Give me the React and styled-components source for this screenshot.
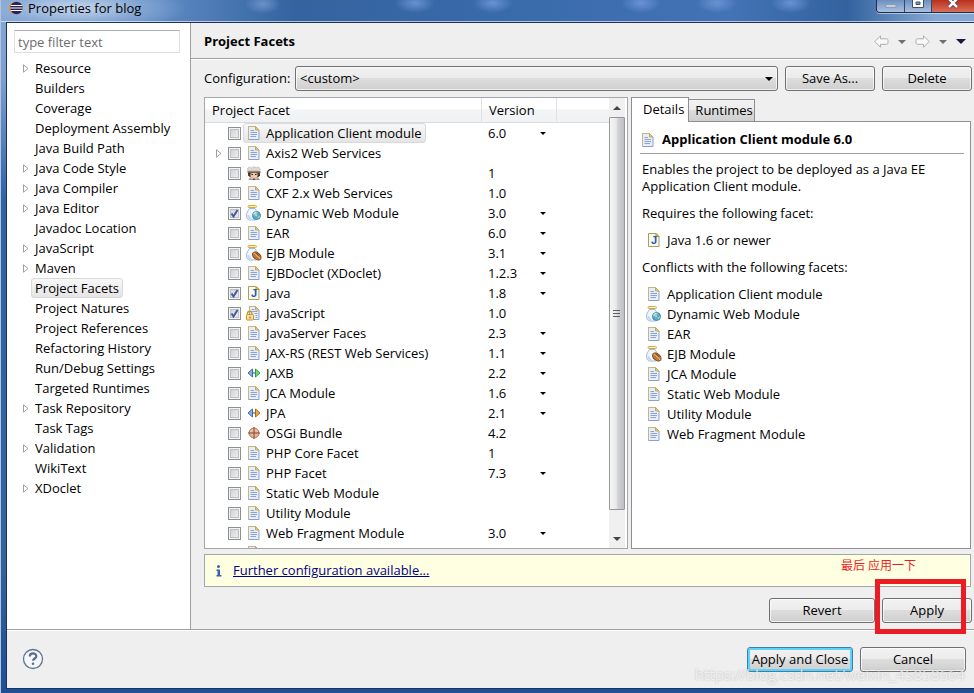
'use strict';

import React from 'react';
import styled, { createGlobalStyle, css } from 'styled-components';

const GlobalStyle = createGlobalStyle`
  * {
    box-sizing: border-box;
  }

  body {
    margin: 0;
    font-family: 'Open Sans', 'Noto Sans CJK SC', sans-serif;
    font-size: 13px;
    line-height: 17px;
    color: #000;
  }

  button, input, select {
    font: inherit;
    color: inherit;
    margin: 0;
  }

  svg {
    display: block;
    flex: none;
  }
`;

/* ---------- window frame ---------- */

const Window = styled.div`
  position: relative;
  display: flex;
  flex-direction: column;
  min-height: 100vh;
  padding: 0 0 4px 6px;
  overflow: hidden;
  background:
    linear-gradient(90deg, #b4c4da 0, #b4c4da 1px, transparent 1px),
    linear-gradient(180deg, #86a8d6 0, #7c9fd0 80px, #2f62a8 200px, #33629f 560px, #1f4f94 100%);
`;

const TitleBar = styled.header`
  display: flex;
  justify-content: space-between;
  align-items: flex-start;
  height: 22px;
  margin-left: -5px;
  padding-left: 8px;
  background:
    radial-gradient(ellipse 110px 24px at 76px 8px, rgba(214, 226, 243, 0.85) 0, rgba(160, 188, 224, 0.5) 60%, transparent 100%),
    radial-gradient(ellipse 18px 10px at 262px 4px, rgba(120, 155, 210, 0.8), transparent),
    radial-gradient(ellipse 20px 10px at 414px 3px, rgba(110, 150, 215, 0.9), transparent),
    radial-gradient(ellipse 20px 10px at 492px 3px, rgba(110, 150, 215, 0.9), transparent),
    radial-gradient(ellipse 20px 10px at 640px 3px, rgba(110, 150, 215, 0.9), transparent),
    radial-gradient(ellipse 20px 10px at 716px 3px, rgba(110, 150, 215, 0.9), transparent),
    radial-gradient(ellipse 20px 10px at 790px 3px, rgba(110, 150, 215, 0.9), transparent),
    linear-gradient(90deg, #7ea2d2 0, #5f8bc4 16%, #34639f 30%, #3a6bab 55%, #4473b5 75%, #33629f 87%, #86a8d4 96%);
  box-shadow: inset 0 -1px 0 rgba(255, 255, 255, 0.6);
`;

const Title = styled.h1`
  display: flex;
  align-items: center;
  gap: 5px;
  height: 16px;
  margin: 0;
  font-size: 13px;
  font-weight: normal;
`;

const Caption = styled.div`
  display: flex;
  height: 13px;
  border: 1px solid #1d2e4a;
  border-top: 0;
  border-right: 0;
  border-radius: 0 0 0 4px;
  box-shadow: 0 1px 0 rgba(255, 255, 255, 0.5);
  overflow: hidden;
`;

const CaptionButton = styled.button`
  display: flex;
  justify-content: center;
  width: ${props => (props.$close ? '43px' : '27px')};
  padding: 0;
  border: 0;
  border-left: 1px solid #33486b;
  background: ${props => (props.$close
    ? 'linear-gradient(180deg, #b92f1c, #d8705a)'
    : 'linear-gradient(180deg, #6c8fbf, #a9c0e0)')};

  &:first-child {
    border-left: 0;
  }
`;

const Client = styled.div`
  flex: 1;
  display: flex;
  flex-direction: column;
  border: 1px solid #1b3358;
  border-right: 0;
  background: #efefef;
`;

const Body = styled.div`
  flex: 1;
  display: flex;
  border-bottom: 1px solid #a0a0a0;
`;

/* ---------- left side ---------- */

const Sidebar = styled.nav`
  flex: none;
  width: 184px;
  padding: 7px 10px 0 7px;
  border-right: 1px solid #a0a0a0;
  background: #fff;
`;

const Filter = styled.input`
  display: block;
  width: 100%;
  height: 23px;
  padding: 0 3px;
  border: 1px solid #dbdfe6;
  border-top-color: #abadb3;
  background: #fff;

  &::placeholder {
    color: #6d6d6d;
    opacity: 1;
  }
`;

const Tree = styled.ul`
  margin: 5px 0 0;
  padding: 0 0 0 7px;
  list-style: none;
`;

const TreeItem = styled.li`
  display: flex;
  align-items: center;
  height: 20px;
`;

const Expander = styled.span`
  flex: none;
  display: flex;
  justify-content: center;
  width: 10px;
`;

const selection = css`
  border-color: #d9d9d9;
  background: linear-gradient(180deg, #f8f8f8, #e5e5e5);
`;

const TreeLabel = styled.button`
  height: 20px;
  padding: 0 3px;
  border: 1px solid transparent;
  border-radius: 3px;
  background: none;
  line-height: 17px;
  ${props => props.$selected && selection}
`;

/* ---------- right side ---------- */

const Page = styled.main`
  flex: 1;
  min-width: 0;
  display: flex;
  flex-direction: column;
`;

const PageHeader = styled.div`
  display: flex;
  align-items: center;
  justify-content: space-between;
  height: 36px;
  padding: 2px 8px 0 13px;
  border-bottom: 1px solid #a0a0a0;
  box-shadow: 0 1px 0 #fff;
`;

const PageTitle = styled.h2`
  margin: 0;
  font-size: 13px;
  font-weight: bold;
`;

const NavTools = styled.div`
  display: flex;
  align-items: center;
  gap: 9px;
`;

const ToolButton = styled.button`
  display: flex;
  padding: 0;
  border: 0;
  background: none;
`;

const Content = styled.div`
  flex: 1;
  display: flex;
  flex-direction: column;
  padding: 7px 2px 6px 13px;
`;

const ConfigRow = styled.div`
  display: flex;
  align-items: center;
  gap: 7px;
`;

const ConfigLabel = styled.label`
  flex: none;
  width: 84px;
`;

const raised = css`
  border: 1px solid #707070;
  border-radius: 3px;
  background: linear-gradient(180deg, #f2f2f2 0, #ebebeb 50%, #dddddd 50%, #cfcfcf 100%);
  box-shadow: inset 0 0 0 1px rgba(255, 255, 255, 0.7);
`;

const Button = styled.button`
  flex: none;
  width: ${props => (props.$wide ? '106px' : '90px')};
  height: 25px;
  padding: 0;
  white-space: nowrap;
  ${raised}
  ${props => props.$primary && css`
    border-color: #3c7fb1;
    box-shadow: inset 0 0 0 2px #5fd3f5;
  `}
`;

const SelectBox = styled.span`
  flex: 1;
  display: grid;
  align-items: center;
  height: 25px;
  ${raised}

  > * {
    grid-area: 1 / 1;
  }

  > svg {
    justify-self: end;
    margin-right: 4px;
    pointer-events: none;
  }
`;

const PlainSelect = styled.select`
  width: 100%;
  padding: 0 4px;
  border: 0;
  background: none;
  appearance: none;
`;

const Panels = styled.div`
  display: flex;
  gap: 3px;
  margin: 6px 1px 0 0;
`;

const FacetPanel = styled.section`
  flex: 424 1 424px;
  display: flex;
  min-width: 0;
  height: 452px;
  padding-right: 2px;
  border: 1px solid #a3a6ac;
  background: #fff;
`;

const TableClip = styled.div`
  flex: 1;
  min-width: 0;
  overflow: hidden;
`;

const Table = styled.table`
  width: 100%;
  table-layout: fixed;
  border-collapse: separate;
  border-spacing: 0;
`;

const Column = styled.th`
  width: ${props => props.$width};
  height: 25px;
  padding: 0 7px;
  border-right: 1px solid #e0e2e5;
  border-bottom: 1px solid #d9dbdf;
  background: linear-gradient(180deg, #fff 0, #fff 45%, #f3f4f6 50%, #f1f2f4 100%);
  font-weight: normal;
  text-align: left;

  &:last-child {
    border-right: 0;
  }
`;

const Cell = styled.td`
  height: 20px;
  padding: 0;
`;

const FacetRow = styled.div`
  display: flex;
  align-items: center;
  height: 20px;
  padding-left: ${props => (props.$bare ? '41px' : '9px')};
`;

const CheckBox = styled.span`
  display: grid;
  flex: none;
  margin: 1px 2px 0 4px;

  > * {
    grid-area: 1 / 1;
  }

  > svg {
    pointer-events: none;
  }
`;

const CheckInput = styled.input`
  width: 13px;
  height: 13px;
  appearance: none;
  border: 1px solid #8e8f8f;
  background: linear-gradient(135deg, #c9cdd2, #f4f4f4);
  box-shadow: inset 0 0 0 1px #f4f4f4, inset 0 0 0 2px #bdc1c6;
`;

const FacetLabel = styled.label`
  display: flex;
  align-items: center;
  gap: 4px;
  height: 20px;
  padding: 0 3px 0 2px;
  border: 1px solid transparent;
  border-radius: 3px;
  white-space: nowrap;
  ${props => props.$selected && selection}
`;

const Version = styled.span`
  display: grid;
  align-items: center;
  width: 64px;
  padding-left: 6px;

  > * {
    grid-area: 1 / 1;
  }

  > svg {
    justify-self: end;
    pointer-events: none;
  }
`;

const VersionSelect = styled(PlainSelect)`
  padding: 0;
`;

const ScrollBar = styled.div`
  flex: none;
  display: flex;
  flex-direction: column;
  width: 16px;
  background: #f0f0f0;
`;

const ScrollArrow = styled.button`
  display: flex;
  justify-content: center;
  align-items: center;
  height: 19px;
  padding: 0;
  border: 0;
  background: none;
`;

const ScrollThumb = styled.div`
  display: flex;
  justify-content: center;
  align-items: center;
  height: 393px;
  margin-bottom: auto;
  border: 1px solid #979797;
  border-radius: 1px;
  background: linear-gradient(90deg, #f5f5f5 0, #e9e9eb 45%, #d2d3d6 55%, #bfc0c4 100%);
`;

const DetailsPanel = styled.section`
  flex: 340 1 340px;
  display: flex;
  flex-direction: column;
  min-width: 0;
`;

const Tabs = styled.div`
  display: flex;
  align-items: flex-end;
  height: 24px;
`;

const Tab = styled.button`
  position: relative;
  height: ${props => (props.$active ? '25px' : '22px')};
  margin-bottom: ${props => (props.$active ? '-1px' : '0')};
  padding: ${props => (props.$active ? '0 4px 2px 11px' : '0 1px 0 6px')};
  border: 1px solid #8c8e94;
  border-left-width: ${props => (props.$active ? '1px' : '0')};
  border-bottom: 0;
  background: ${props => (props.$active
    ? '#fff'
    : 'linear-gradient(180deg, #f2f2f2 0, #ebebeb 50%, #dddddd 50%, #cfcfcf 100%)')};
`;

const TabBody = styled.div`
  flex: 1;
  padding: 8px 6px 0 8px;
  border: 1px solid #8c8e94;
  background: #fff;
`;

const DetailsTitle = styled.h3`
  display: flex;
  align-items: center;
  gap: 6px;
  height: 24px;
  margin: 0;
  padding-bottom: 4px;
  border-bottom: 1px solid #a0a0a0;
  font-size: 13px;
`;

const Paragraph = styled.p`
  max-width: 300px;
  margin: 7px 0 8px 2px;

  & + & {
    margin-top: 10px;
  }
`;

const FacetList = styled.ul`
  margin: 0 0 9px;
  padding: 0 0 0 6px;
  list-style: none;
`;

const FacetListItem = styled.li`
  display: flex;
  align-items: center;
  gap: 5px;
  height: 20px;
`;

const InfoBar = styled.div`
  position: relative;
  display: flex;
  align-items: center;
  gap: 8px;
  height: 33px;
  margin: 5px 1px 0 0;
  padding-left: 8px;
  border: 1px solid #a3a6ac;
  background: #ffffe1;
`;

const InfoLink = styled.a`
  color: #00008b;
  text-decoration: underline;
`;

const Note = styled.span`
  position: absolute;
  top: 2px;
  right: 54px;
  color: #ed1c24;
  font-size: 12px;
`;

const PageButtons = styled.div`
  display: flex;
  justify-content: flex-end;
  gap: 7px;
  margin-top: 11px;
`;

const Marked = styled.span`
  position: relative;
  display: flex;

  &::after {
    content: '';
    position: absolute;
    inset: -19px 6px -11px -7px;
    border: 5px solid #ed1c24;
    pointer-events: none;
  }
`;

const Footer = styled.footer`
  display: flex;
  align-items: center;
  justify-content: space-between;
  height: 58px;
  padding: 0 8px 0 15px;
  box-shadow: inset 0 1px 0 #fff;
`;

const FooterButtons = styled.div`
  display: flex;
  gap: 7px;
`;

const Watermark = styled.span`
  position: absolute;
  right: 9px;
  bottom: 9px;
  color: rgba(255, 255, 255, 0.7);
  font-size: 15px;
  line-height: 20px;
  text-shadow: 0 0 2px rgba(120, 120, 120, 0.5);
  pointer-events: none;
`;

/* ---------- icons ---------- */

const Svg = ({ size = 16, children }) => (
  <svg width={size} height={size} viewBox={`0 0 ${size} ${size}`} aria-hidden="true">
    {children}
  </svg>
);

const DocIcon = () => (
  <Svg>
    <path d="M2.500 1.500h7l3.500 3.500v9.500H2.500z" fill="#e6eefa" stroke="#8d9fca" />
    <path d="M2.500 14V1.500h7" fill="none" stroke="#c8b67c" />
    <path d="M9.500 1.500v3.500h3.500z" fill="#e8c877" stroke="#c6a85a" />
    <path d="M4.500 5.500h3.500M4.500 7.500h6.500M4.500 9.500h6.500M4.500 11.500h5.500" stroke="#8ba3d6" />
  </Svg>
);

const JavaIcon = () => (
  <Svg>
    <path d="M2.500 1.500h7.500l3 3v10H2.500z" fill="#f3f8fd" stroke="#b99a45" />
    <path d="M10 1.500v3h3z" fill="#edcb72" stroke="#b98f35" />
    <text x="5" y="12" fontSize="11" fontWeight="bold" fontFamily="Liberation Sans, sans-serif" fill="#1f5f96">J</text>
  </Svg>
);

const LockedDocIcon = () => (
  <Svg>
    <path d="M3.500 1.500h6l3.500 3.500v9.500H3.500z" fill="#e6eefa" stroke="#8d9fca" />
    <path d="M3.500 8V1.500h6" fill="none" stroke="#c8b67c" />
    <path d="M9.500 1.500v3.500h3.500z" fill="#e8c877" stroke="#c6a85a" />
    <path d="M5.500 4.500h3M5.500 6.500h6M8.500 8.500h3M9.500 10.500h2M9.500 12.500h2" stroke="#8ba3d6" />
    <path d="M1.500 10V8.500a2.200 2.200 0 0 1 4.500 0V10" fill="none" stroke="#c4952a" strokeWidth="1.300" />
    <rect x=".500" y="9.500" width="7" height="5.500" rx="1" fill="#f8e09a" stroke="#c4952a" />
    <path d="M4 11.500v2" stroke="#80601a" />
  </Svg>
);

const Jar = () => (
  <g>
    <path d="M3.500 3.500C2 6 .500 7.500.500 10.500c0 3 1.500 4.500 3.500 4.500h5c2 0 3.200-1.800 3.200-4.500 0-3-1.800-4.500-3.200-7z" fill="#f0f6fc" stroke="#9dbbdf" />
    <path d="M2.300 10c0 2.500 1 3.700 3 3.700" fill="none" stroke="#c3dbf1" strokeWidth="2" />
    <rect x="2" y=".500" width="8.500" height="2" rx="1" fill="#fdf0c4" stroke="#d9a938" />
  </g>
);

const WebJarIcon = () => (
  <Svg>
    <Jar />
    <circle cx="10.500" cy="10.500" r="4" fill="#5aa6df" stroke="#4084bd" />
    <path d="M8 8c1.500-1.500 3-1.500 4-.500L10.500 9l1 1.500-1.500 1L8 10zM11.500 12l2-1.500.500 1-1.500 2z" fill="#a9dd8d" />
    <path d="M7.500 9.500c.500-1.500 1.500-2 2.500-2.200" fill="none" stroke="#e4f4fc" />
  </Svg>
);

const BeanJarIcon = () => (
  <Svg>
    <Jar />
    <ellipse cx="10.800" cy="11" rx="4.800" ry="3.200" transform="rotate(40 10.800 11)" fill="#bd7a3c" stroke="#804717" />
    <path d="M7.500 8c2.500 0 2 2.500 3.500 3s2 1 3 3" fill="none" stroke="#f0c48c" />
    <path d="M9.500 7.800c2 .700 1.500 2 3.700 3" fill="none" stroke="#804717" />
  </Svg>
);

const ComposerIcon = () => (
  <Svg>
    <path d="M2 6c-2-3 2-5 3.500-3 1-1.500 3.500-1.500 4.500 0 2-2 5.500 0 3.500 3z" fill="#dedbd6" stroke="#b9b5af" strokeWidth=".700" />
    <path d="M2 6.500h12v4l-2 2H4.500L2 10.500z" fill="#4a362c" />
    <path d="M4.500 8.500c2-1 5-1 7 0v3c-1 2.500-6 2.500-7 0z" fill="#efc7a4" />
    <path d="M5.500 9.500h1.500M9 9.500h1.500" stroke="#2c1d17" />
    <path d="M3.500 13c2 1 7 1 9 0l1.500 2H2.500z" fill="#9b9590" />
    <path d="M6.500 13.500h3l-1.500 2z" fill="#4b4542" />
    <path d="M1 7h14" stroke="#8a837c" />
  </Svg>
);

const ArrowsIcon = ({ fill, stroke }) => (
  <Svg>
    <path d="M6.500 4v8L2 8z" fill="#86b3e6" stroke="#3e6ca6" />
    <path d="M9.500 4v8L14 8z" fill={fill} stroke={stroke} />
    <path d="M6.500 8h3" stroke="#33527c" />
  </Svg>
);

const OsgiIcon = () => (
  <Svg>
    <circle cx="8" cy="8" r="5" fill="#dfb59d" stroke="#b3785b" />
    <path d="M8 2v12M2 8h12" stroke="#8b4a2f" />
    <path d="M5 6.500c.300-.800.700-1.200 1.500-1.500M9.500 5c.800.300 1.200.700 1.500 1.500" fill="none" stroke="#f6e3d8" />
  </Svg>
);

const EclipseIcon = () => (
  <Svg size={14}>
    <circle cx="6" cy="7" r="6" fill="#f7941e" />
    <circle cx="7.500" cy="7" r="6.200" fill="#2c2255" />
    <path d="M1.800 4.500h11.400M1.300 7h12.400M1.800 9.500h11.400" stroke="#fff" strokeWidth="1.200" />
  </Svg>
);

const Caret = ({ width = 8, color = '#000' }) => (
  <svg width={width} height={width / 2} viewBox="0 0 8 4" aria-hidden="true">
    <path d="M0 0h8L4 4z" fill={color} />
  </svg>
);

const Triangle = () => (
  <svg width="6" height="9" viewBox="0 0 6 9" aria-hidden="true">
    <path d="M.500.800v7.400l4.500-3.700z" fill="#fff" stroke="#a0a0a0" />
  </svg>
);

const CheckMark = () => (
  <svg width="13" height="13" viewBox="0 0 13 13" aria-hidden="true">
    <path d="M3.500 6.500l2 3L9.500 3" fill="none" stroke="#3f5c9c" strokeWidth="2" />
  </svg>
);

const HistoryArrow = ({ forward }) => (
  <svg width="15" height="13" viewBox="0 0 15 13" aria-hidden="true">
    <path
      d="M.800 6.500L6.500.800v3h6q1.500 0 1.500 1.500v2.500q0 1.500-1.500 1.500h-6v3z"
      transform={forward ? 'translate(15 0) scale(-1 1)' : undefined}
      fill="#f8f8f8"
      stroke="#b0b0b0"
    />
  </svg>
);

const InfoIcon = () => (
  <svg width="12" height="16" viewBox="0 0 12 16" aria-hidden="true">
    <circle cx="5.500" cy="3.500" r="1.500" fill="#3b62ad" />
    <path d="M3.500 6.500H7V12h1.500v1.500h-5V12h1V8h-1z" fill="#3b62ad" />
  </svg>
);

const HelpIcon = () => (
  <Svg size={22}>
    <circle cx="11" cy="11" r="9.500" fill="#f6f7f9" stroke="#5f7394" strokeWidth="1.300" />
    <path d="M7.800 8.500c0-4 6.500-4 6.500-.300 0 2.300-3.200 2.300-3.200 4.600" fill="none" stroke="#5a6d8f" strokeWidth="2.200" />
    <circle cx="11" cy="15.800" r="1.300" fill="#5a6d8f" />
  </Svg>
);

const icons = {
  doc: <DocIcon />,
  java: <JavaIcon />,
  locked: <LockedDocIcon />,
  web: <WebJarIcon />,
  ejb: <BeanJarIcon />,
  composer: <ComposerIcon />,
  jaxb: <ArrowsIcon fill="#72dc72" stroke="#30a040" />,
  jpa: <ArrowsIcon fill="#f0a83c" stroke="#b06d14" />,
  osgi: <OsgiIcon />
};

/* ---------- data ---------- */

const tree = [
  { name: 'Resource', children: true },
  { name: 'Builders' },
  { name: 'Coverage' },
  { name: 'Deployment Assembly' },
  { name: 'Java Build Path' },
  { name: 'Java Code Style', children: true },
  { name: 'Java Compiler', children: true },
  { name: 'Java Editor', children: true },
  { name: 'Javadoc Location' },
  { name: 'JavaScript', children: true },
  { name: 'Maven', children: true },
  { name: 'Project Facets' },
  { name: 'Project Natures' },
  { name: 'Project References' },
  { name: 'Refactoring History' },
  { name: 'Run/Debug Settings' },
  { name: 'Targeted Runtimes' },
  { name: 'Task Repository', children: true },
  { name: 'Task Tags' },
  { name: 'Validation', children: true },
  { name: 'WikiText' },
  { name: 'XDoclet', children: true }
];

const facets = [
  { name: 'Application Client module', icon: 'doc', version: '6.0', choice: true },
  { name: 'Axis2 Web Services', icon: 'doc', children: true },
  { name: 'Composer', icon: 'composer', version: '1' },
  { name: 'CXF 2.x Web Services', icon: 'doc', version: '1.0' },
  { name: 'Dynamic Web Module', icon: 'web', version: '3.0', choice: true, checked: true },
  { name: 'EAR', icon: 'doc', version: '6.0', choice: true },
  { name: 'EJB Module', icon: 'ejb', version: '3.1', choice: true },
  { name: 'EJBDoclet (XDoclet)', icon: 'doc', version: '1.2.3', choice: true },
  { name: 'Java', icon: 'java', version: '1.8', choice: true, checked: true },
  { name: 'JavaScript', icon: 'locked', version: '1.0', checked: true },
  { name: 'JavaServer Faces', icon: 'doc', version: '2.3', choice: true },
  { name: 'JAX-RS (REST Web Services)', icon: 'doc', version: '1.1', choice: true },
  { name: 'JAXB', icon: 'jaxb', version: '2.2', choice: true },
  { name: 'JCA Module', icon: 'doc', version: '1.6', choice: true },
  { name: 'JPA', icon: 'jpa', version: '2.1', choice: true },
  { name: 'OSGi Bundle', icon: 'osgi', version: '4.2' },
  { name: 'PHP Core Facet', icon: 'doc', version: '1' },
  { name: 'PHP Facet', icon: 'doc', version: '7.3', choice: true },
  { name: 'Static Web Module', icon: 'doc' },
  { name: 'Utility Module', icon: 'doc' },
  { name: 'Web Fragment Module', icon: 'doc', version: '3.0', choice: true }
];

const conflicts = [
  { name: 'Application Client module', icon: 'doc' },
  { name: 'Dynamic Web Module', icon: 'web' },
  { name: 'EAR', icon: 'doc' },
  { name: 'EJB Module', icon: 'ejb' },
  { name: 'JCA Module', icon: 'doc' },
  { name: 'Static Web Module', icon: 'doc' },
  { name: 'Utility Module', icon: 'doc' },
  { name: 'Web Fragment Module', icon: 'doc' }
];

/* ---------- parts ---------- */

const Facet = ({ facet, selected, onToggle }) => {
  const id = 'facet-' + facet.name.replace(/\W+/g, '-').toLowerCase();

  return (
    <tr>
      <Cell>
        <FacetRow>
          <Expander>{facet.children && <Triangle />}</Expander>
          <CheckBox>
            <CheckInput type="checkbox" id={id} checked={facet.checked} onChange={onToggle} />
            {facet.checked && <CheckMark />}
          </CheckBox>
          <FacetLabel htmlFor={id} $selected={selected}>
            {icons[facet.icon]}
            {facet.name}
          </FacetLabel>
        </FacetRow>
      </Cell>
      <Cell>
        <Version>
          {facet.choice ? (
            <>
              <VersionSelect aria-label={facet.name + ' version'}>
                <option>{facet.version}</option>
              </VersionSelect>
              <Caret width={6} />
            </>
          ) : facet.version}
        </Version>
      </Cell>
      <Cell />
    </tr>
  );
};

const FacetItems = ({ items }) => (
  <FacetList>
    {items.map(item => (
      <FacetListItem key={item.name}>
        {icons[item.icon]}
        {item.name}
      </FacetListItem>
    ))}
  </FacetList>
);

class App extends React.Component {
  state = {
    page: 'Project Facets',
    checked: facets.filter(f => f.checked).map(f => f.name)
  };

  toggle(name) {
    const { checked } = this.state;
    this.setState({
      checked: checked.includes(name)
        ? checked.filter(n => n !== name)
        : checked.concat(name)
    });
  }

  render() {
    const { page, checked } = this.state;

    return (
      <Window>
        <GlobalStyle />
        <TitleBar>
          <Title><EclipseIcon />Properties for blog</Title>
          <Caption>
            <CaptionButton aria-label="Minimize">
              <svg width="12" height="12" viewBox="0 0 12 12"><path d="M1 4.500h10v3H1z" fill="#c4d0e2" stroke="#8c9bb5" /></svg>
            </CaptionButton>
            <CaptionButton aria-label="Maximize">
              <svg width="12" height="12" viewBox="0 0 12 12"><path d="M.500-2h11v9.500H.500z" fill="#fff" stroke="#43506a" /><path d="M4 2h4v2.500H4z" fill="#7f9bc4" stroke="#43506a" /></svg>
            </CaptionButton>
            <CaptionButton $close aria-label="Close">
              <svg width="12" height="12" viewBox="0 0 12 12"><path d="M2-1l8 8M10-1L2 7" stroke="#57334a" strokeWidth="4" /><path d="M2-1l8 8M10-1L2 7" stroke="#fff" strokeWidth="2.500" /></svg>
            </CaptionButton>
          </Caption>
        </TitleBar>

        <Client>
          <Body>
            <Sidebar>
              <Filter placeholder="type filter text" aria-label="type filter text" />
              <Tree>
                {tree.map(item => (
                  <TreeItem key={item.name}>
                    <Expander>{item.children && <Triangle />}</Expander>
                    <TreeLabel
                      $selected={item.name === page}
                      onClick={() => this.setState({ page: item.name })}
                    >
                      {item.name}
                    </TreeLabel>
                  </TreeItem>
                ))}
              </Tree>
            </Sidebar>

            <Page>
              <PageHeader>
                <PageTitle>Project Facets</PageTitle>
                <NavTools>
                  <ToolButton aria-label="Back"><HistoryArrow /></ToolButton>
                  <ToolButton aria-label="Back history"><Caret color="#6e6e76" /></ToolButton>
                  <ToolButton aria-label="Forward"><HistoryArrow forward /></ToolButton>
                  <ToolButton aria-label="Forward history"><Caret color="#6e6e76" /></ToolButton>
                  <ToolButton aria-label="Menu"><Caret width={10} color="#24143c" /></ToolButton>
                </NavTools>
              </PageHeader>

              <Content>
                <ConfigRow>
                  <ConfigLabel htmlFor="configuration">Configuration:</ConfigLabel>
                  <SelectBox>
                    <PlainSelect id="configuration">
                      <option>&lt;custom&gt;</option>
                    </PlainSelect>
                    <Caret />
                  </SelectBox>
                  <Button>Save As...</Button>
                  <Button>Delete</Button>
                </ConfigRow>

                <Panels>
                  <FacetPanel>
                    <TableClip>
                      <Table>
                        <thead>
                          <tr>
                            <Column $width="277px">Project Facet</Column>
                            <Column $width="75px">Version</Column>
                            <Column $width="auto" />
                          </tr>
                        </thead>
                        <tbody>
                          {facets.map((facet, i) => (
                            <Facet
                              key={facet.name}
                              facet={{ ...facet, checked: checked.includes(facet.name) }}
                              selected={i === 0}
                              onToggle={() => this.toggle(facet.name)}
                            />
                          ))}
                          {/* next row, only its top edge is in view */}
                          <tr>
                            <Cell colSpan={3}><FacetRow $bare>{icons.doc}</FacetRow></Cell>
                          </tr>
                        </tbody>
                      </Table>
                    </TableClip>
                    <ScrollBar>
                      <ScrollArrow aria-label="Scroll up">
                        <svg width="8" height="4" viewBox="0 0 8 4"><path d="M0 4h8L4 0z" fill="#444" /></svg>
                      </ScrollArrow>
                      <ScrollThumb>
                        <svg width="8" height="8" viewBox="0 0 8 8"><path d="M0 .500h7M0 3.500h7M0 6.500h7" stroke="#606060" /></svg>
                      </ScrollThumb>
                      <ScrollArrow aria-label="Scroll down"><Caret color="#444" /></ScrollArrow>
                    </ScrollBar>
                  </FacetPanel>

                  <DetailsPanel>
                    <Tabs role="tablist">
                      <Tab role="tab" aria-selected="true" $active>Details</Tab>
                      <Tab role="tab" aria-selected="false">Runtimes</Tab>
                    </Tabs>
                    <TabBody>
                      <DetailsTitle>{icons.doc}Application Client module 6.0</DetailsTitle>
                      <Paragraph>
                        Enables the project to be deployed as a Java EE Application Client module.
                      </Paragraph>
                      <Paragraph>Requires the following facet:</Paragraph>
                      <FacetItems items={[{ name: 'Java 1.6 or newer', icon: 'java' }]} />
                      <Paragraph>Conflicts with the following facets:</Paragraph>
                      <FacetItems items={conflicts} />
                    </TabBody>
                  </DetailsPanel>
                </Panels>

                <InfoBar>
                  <InfoIcon />
                  <InfoLink href="#further">Further configuration available...</InfoLink>
                  <Note>最后 应用一下</Note>
                </InfoBar>

                <PageButtons>
                  <Button $wide>Revert</Button>
                  <Marked><Button>Apply</Button></Marked>
                </PageButtons>
              </Content>
            </Page>
          </Body>

          <Footer>
            <ToolButton aria-label="Help"><HelpIcon /></ToolButton>
            <FooterButtons>
              <Button $wide $primary>Apply and Close</Button>
              <Button $wide>Cancel</Button>
            </FooterButtons>
          </Footer>
        </Client>
        <Watermark>https://blog.csdn.net/weixin_45858664</Watermark>
      </Window>
    );
  }
}

export default App;
